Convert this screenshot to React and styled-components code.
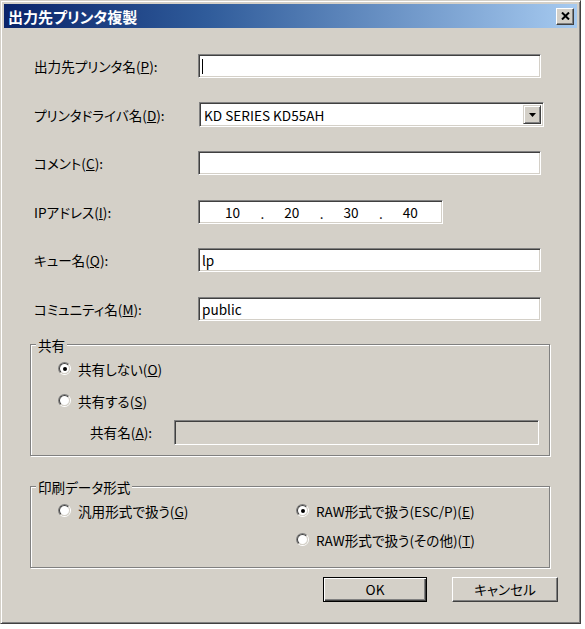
import styled, { createGlobalStyle } from 'styled-components';

const GlobalStyle = createGlobalStyle`
  html, body {
    margin: 0;
    padding: 0;
    background: #fff;
  }
  body {
    font-family: "Noto Sans CJK JP", "Noto Sans", sans-serif;
    font-size: 13.6px;
    color: #000;
  }
  * {
    box-sizing: border-box;
  }
`;

const fields = [
  {label: '出力先プリンタ名', key: 'P', value: '', caret: true},
  {label: 'プリンタドライバ名', key: 'D', value: 'KD SERIES KD55AH', select: true},
  {label: 'コメント', key: 'C', value: ''},
  {label: 'IPアドレス', key: 'I', ip: ['10', '20', '30', '40']},
  {label: 'キュー名', key: 'Q', value: 'lp'},
  {label: 'コミュニティ名', key: 'M', value: 'public'},
];

const Label = ({text, k}) => (
  <>{text}(<u>{k}</u>):</>
);

const Radio = ({checked, children}) => (
  <RadioRow>
    <RadioOuter>
      <RadioInner>{checked && <RadioDot/>}</RadioInner>
    </RadioOuter>
    <span>{children}</span>
  </RadioRow>
);

const App = () => {
  return (
    <>
      <GlobalStyle/>
      <Window>
        <TitleBar>
          <Title>出力先プリンタ複製</Title>
          <CloseButton>
            <svg width="9" height="8" viewBox="0 0 9 8">
              <path d="M1 0.5 L8 7.5 M8 0.5 L1 7.5" stroke="#000" strokeWidth="2"/>
            </svg>
          </CloseButton>
        </TitleBar>
        <Body>
          <Form>
            {fields.map((f) => (
              <FieldRow key={f.key}>
                <FieldLabel><Label text={f.label} k={f.key}/></FieldLabel>
                {f.ip ? (
                  <IpBox>
                    {f.ip.map((n, i) => (
                      <IpPart key={i} $dot={i < 3}>{n}</IpPart>
                    ))}
                  </IpBox>
                ) : f.select ? (
                  <SelectBox>
                    <SelectText>{f.value}</SelectText>
                    <DropButton>
                      <svg width="7" height="4" viewBox="0 0 7 4">
                        <path d="M0 0 H7 L3.5 4 Z" fill="#000"/>
                      </svg>
                    </DropButton>
                  </SelectBox>
                ) : (
                  <TextBox>
                    {f.caret && <Caret/>}
                    {f.value}
                  </TextBox>
                )}
              </FieldRow>
            ))}
          </Form>

          <Group $top={16}>
            <Legend>共有</Legend>
            <GroupStack>
              <Radio checked>共有しない(<u>O</u>)</Radio>
              <Radio>共有する(<u>S</u>)</Radio>
              <ShareRow>
                <ShareLabel>共有名(<u>A</u>):</ShareLabel>
                <TextBox $disabled $width={365}/>
              </ShareRow>
            </GroupStack>
          </Group>

          <Group $top={23}>
            <Legend>印刷データ形式</Legend>
            <FormatGrid>
              <Radio>汎用形式で扱う(<u>G</u>)</Radio>
              <Radio checked>RAW形式で扱う(ESC/P)(<u>E</u>)</Radio>
              <span/>
              <Radio>RAW形式で扱う(その他)(<u>T</u>)</Radio>
            </FormatGrid>
          </Group>

          <Buttons>
            <Button $default>OK</Button>
            <Button>キャンセル</Button>
          </Buttons>
        </Body>
      </Window>
    </>
  );
};

const Window = styled.div`
  width: 581px;
  height: 624px;
  background: #d4d0c8;
  border: 1px solid;
  border-color: #d4d0c8 #404040 #404040 #d4d0c8;
  box-shadow: inset 1px 1px #fff, inset -1px -1px #808080;
  padding: 3px;
  display: flex;
  flex-direction: column;
`;

const TitleBar = styled.div`
  height: 24px;
  flex-shrink: 0;
  background: linear-gradient(to right, #0a246a 0%, #2f5b9a 35%, #a6caf0 100%);
  display: flex;
  align-items: center;
  justify-content: space-between;
  padding: 0 3px 0 4px;
`;

const Title = styled.div`
  color: #fff;
  font-weight: bold;
  font-size: 15px;
  font-feature-settings: "palt";
`;

const CloseButton = styled.div`
  width: 18px;
  height: 17px;
  background: #d4d0c8;
  border: 1px solid;
  border-color: #fff #404040 #404040 #fff;
  box-shadow: inset -1px -1px #808080;
  display: flex;
  align-items: center;
  justify-content: center;
`;

const Body = styled.div`
  flex: 1;
  display: flex;
  flex-direction: column;
  padding: 26px 0 0 28px;
`;

const Form = styled.div`
  display: flex;
  flex-direction: column;
  gap: 24.6px;
`;

const FieldRow = styled.div`
  display: flex;
  align-items: center;
  height: 24px;
`;

const FieldLabel = styled.div`
  width: 166px;
  padding-left: 2px;
  font-feature-settings: "palt";
`;

const sunken = `
  background: #fff;
  border: 1px solid;
  border-color: #808080 #fff #fff #808080;
  box-shadow: inset 1px 1px #404040, inset -1px -1px #d4d0c8;
`;

const TextBox = styled.div`
  ${sunken};
  width: ${p => p.$width || 343}px;
  height: ${p => p.$disabled ? 25 : 24}px;
  background: ${p => p.$disabled ? '#d4d0c8' : '#fff'};
  display: flex;
  align-items: center;
  padding-left: 3px;
`;

const Caret = styled.span`
  width: 1px;
  height: 15px;
  background: #000;
`;

const SelectBox = styled.div`
  ${sunken};
  width: 345px;
  height: 25px;
  margin-left: 1px;
  display: flex;
  align-items: stretch;
  padding: 2px;
`;

const SelectText = styled.div`
  flex: 1;
  display: flex;
  align-items: center;
  padding-left: 2px;
`;

const DropButton = styled.div`
  width: 18px;
  background: #d4d0c8;
  border: 1px solid;
  border-color: #d4d0c8 #404040 #404040 #d4d0c8;
  box-shadow: inset 1px 1px #fff, inset -1px -1px #808080;
  display: flex;
  align-items: center;
  justify-content: center;
`;

const IpBox = styled.div`
  ${sunken};
  width: 245px;
  height: 24px;
  display: grid;
  grid-template-columns: repeat(4, 1fr);
  padding: 0 2px 0 4px;
`;

const IpPart = styled.div`
  position: relative;
  display: flex;
  align-items: center;
  justify-content: center;

  &::after {
    content: ${p => p.$dot ? '"."' : 'none'};
    position: absolute;
    right: -2px;
    top: 2px;
  }
`;

const Group = styled.fieldset`
  margin: ${p => p.$top}px 0 0 -2px;
  width: 520px;
  padding: 0 0 0 27px;
  border: 1px solid #808080;
  box-shadow: inset 1px 1px #fff, 1px 1px #fff;
  min-inline-size: 0;
`;

const Legend = styled.legend`
  padding: 0 2px;
  margin-left: -22px;
  line-height: 16px;
  background: #d4d0c8;
  font-feature-settings: "palt";
`;

const GroupStack = styled.div`
  display: flex;
  flex-direction: column;
  gap: 12px;
  padding: 6px 0 10px;
`;

const RadioRow = styled.div`
  display: flex;
  align-items: center;
  gap: 7px;
  height: 20px;
  font-feature-settings: "palt";
`;

const RadioOuter = styled.span`
  width: 13px;
  height: 13px;
  border-radius: 50%;
  border: 1px solid;
  border-color: #808080 #fff #fff #808080;
  flex-shrink: 0;
`;

const RadioInner = styled.span`
  display: flex;
  align-items: center;
  justify-content: center;
  width: 100%;
  height: 100%;
  border-radius: 50%;
  border: 1px solid;
  border-color: #404040 #d4d0c8 #d4d0c8 #404040;
  background: #fff;
`;

const RadioDot = styled.span`
  width: 4px;
  height: 4px;
  border-radius: 50%;
  background: #000;
`;

const ShareRow = styled.div`
  display: flex;
  align-items: center;
  margin-top: -3px;
`;

const ShareLabel = styled.div`
  width: 116px;
  padding-left: 32px;
  font-feature-settings: "palt";
`;

const FormatGrid = styled.div`
  display: grid;
  grid-template-columns: 238px 1fr;
  row-gap: 9px;
  padding: 6px 0 17px;
`;

const Buttons = styled.div`
  display: flex;
  justify-content: flex-end;
  gap: 25px;
  margin-top: 9px;
  padding-right: 19px;
`;

const Button = styled.div`
  width: ${p => p.$default ? 104 : 106}px;
  height: 25px;
  display: flex;
  align-items: center;
  justify-content: center;
  background: #d4d0c8;
  font-feature-settings: "palt";
  border: 1px solid;
  border-color: ${p => p.$default ? '#000' : '#fff #404040 #404040 #fff'};
  box-shadow: ${p => p.$default
    ? 'inset 1px 1px #fff, inset -1px -1px #404040, inset -2px -2px #808080'
    : 'inset -1px -1px #808080'};
`;

export default App;
